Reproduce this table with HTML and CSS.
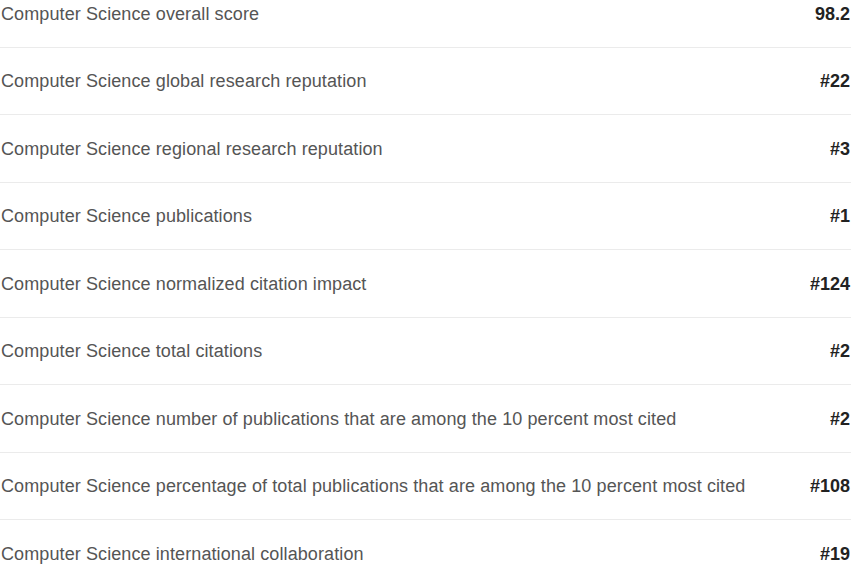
FILE: index.html
```html
<!DOCTYPE html>
<html>
<head>
<meta charset="utf-8">
<link rel="stylesheet" href="styles.css">
</head>
<body>
<ul class="stats">
  <li class="row"><span class="label">Computer Science overall score</span><span class="value">98.2</span></li>
  <li class="row"><span class="label">Computer Science global research reputation</span><span class="value">#22</span></li>
  <li class="row"><span class="label">Computer Science regional research reputation</span><span class="value">#3</span></li>
  <li class="row"><span class="label">Computer Science publications</span><span class="value">#1</span></li>
  <li class="row"><span class="label">Computer Science normalized citation impact</span><span class="value">#124</span></li>
  <li class="row"><span class="label">Computer Science total citations</span><span class="value">#2</span></li>
  <li class="row"><span class="label">Computer Science number of publications that are among the 10 percent most cited</span><span class="value">#2</span></li>
  <li class="row"><span class="label">Computer Science percentage of total publications that are among the 10 percent most cited</span><span class="value">#108</span></li>
  <li class="row"><span class="label">Computer Science international collaboration</span><span class="value">#19</span></li>
</ul>
</body>
</html>
```
FILE: styles.css
```css
html, body {
  margin: 0;
  padding: 0;
  background: #fff;
}
body {
  font-family: "Liberation Sans", Arial, sans-serif;
  overflow: hidden;
}
.stats {
  list-style: none;
  margin: -20px 0 0 0;
  padding: 0;
  width: 851px;
}
.row {
  box-sizing: border-box;
  display: flex;
  justify-content: space-between;
  align-items: center;
  height: 67.5px;
  padding-top: 2px;
  border-bottom: 1px solid #ebebeb;
  padding-left: 1px;
}
.label {
  font-size: 18px;
  letter-spacing: 0.1px;
  color: #555;
}
.value {
  font-size: 18px;
  font-weight: bold;
  color: #222;
  padding-right: 1px;
}
```
